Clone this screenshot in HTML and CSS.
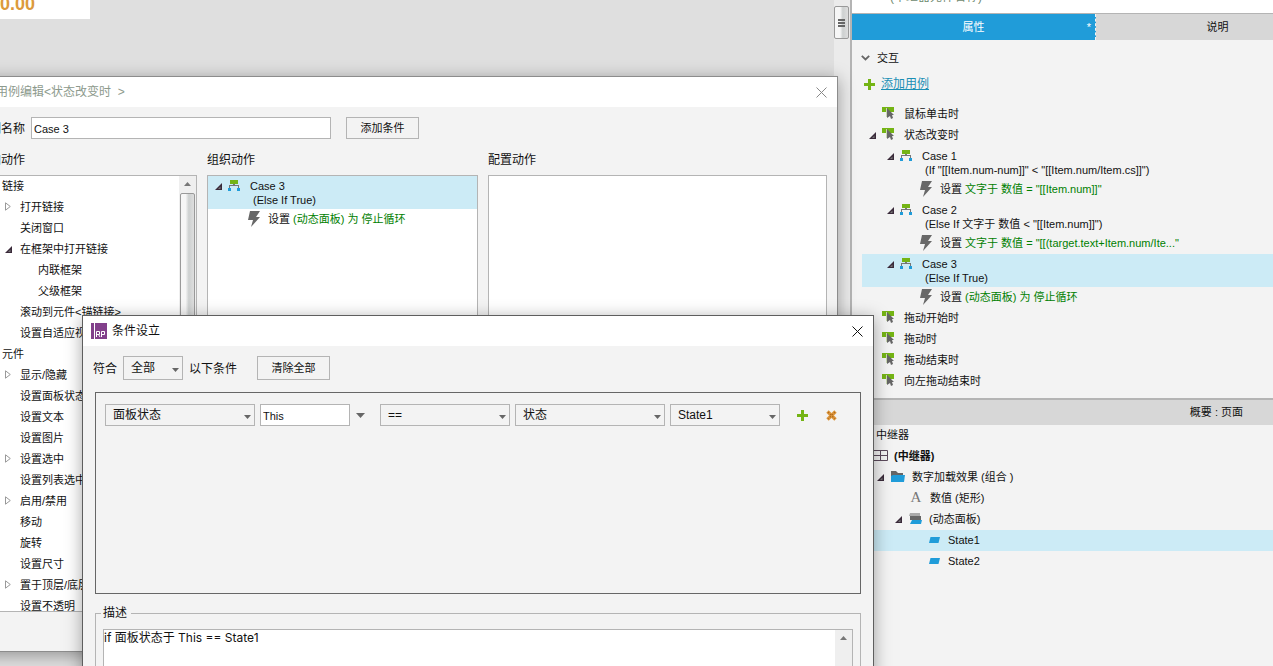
FILE: index.html
```html
<!DOCTYPE html>
<html lang="zh-CN">
<head>
<meta charset="utf-8">
<title>条件设立</title>
<link rel="stylesheet" href="styles.css">
</head>
<body>
<svg class="defs" aria-hidden="true">
  <symbol id="open" viewBox="0 0 7 7"><path d="M7 0V7H0Z" fill="#3a2a3a"/><path d="M5.5 3.5V6H3Z" fill="#777"/></symbol>
  <symbol id="closed" viewBox="0 0 6 9"><path d="M.5.8V8.2L5.3 4.5Z" fill="#fff" stroke="#999"/></symbol>
  <symbol id="case" viewBox="0 0 12 11"><path d="M2 0H10V4H2Z" fill="#74b414"/><path d="M5 4H7V5H11V8H10V6H2V8H1V5H5Z" fill="#777"/><path d="M0 8H3V11H0ZM9 8H12V11H9Z" fill="#209cd9"/></symbol>
  <symbol id="event" viewBox="0 0 12 12"><path d="M0 0H12V5H0Z" fill="#74b414"/><path d="M5 1L12 8H10L11 11L9 12L8 9L5 11Z" fill="#666"/><path d="M4 1H5V10H4Z" fill="#c9d8b0"/></symbol>
  <symbol id="bolt" viewBox="0 0 12 16"><path d="M2 0H12L8 6H12L3 16L5 9H0Z" fill="#686868"/></symbol>
  <symbol id="down" viewBox="0 0 9 5"><path d="M0 0H9L4.500 5Z" fill="#666"/></symbol>
  <symbol id="up" viewBox="0 0 7 4"><path d="M0 4H7L3.500 0Z" fill="#777"/></symbol>
  <symbol id="plus" viewBox="0 0 11 11"><path d="M4 0H7V4H11V7H7V11H4V7H0V4H4Z" fill="#74b414"/></symbol>
  <symbol id="close" viewBox="0 0 11 11"><path d="M.5.5L10.500 10.500M10.500.5L.5 10.500" fill="none" stroke="currentColor" stroke-width="1"/></symbol>
  <symbol id="remove" viewBox="0 0 11 11"><path d="M1.500 1.500L9.500 9.500M9.500 1.500L1.500 9.500" stroke="#dc963c" stroke-width="3.400"/><path d="M2 2L9 9M9 2L2 9" stroke="#b0691c" stroke-width="1.200" stroke-dasharray="1.500 1.500"/></symbol>
  <symbol id="chevron" viewBox="0 0 9 6"><path d="M.8.8L4.500 4.500L8.200.8" fill="none" stroke="#666" stroke-width="1.800"/></symbol>
  <symbol id="repeater" viewBox="0 0 15 11"><path d="M.5.5H14.500V10.500H.5ZM7.500.5V10.500M.5 5.500H14.500" fill="none" stroke="#5c4a5c"/></symbol>
  <symbol id="folder" viewBox="0 0 14 11"><path d="M0 0H5L7 2H12V5H0Z" fill="#666"/><path d="M0 11V5L2 4H14L13 11Z" fill="#209cd9"/></symbol>
  <symbol id="panel" viewBox="0 0 13 11"><path d="M1 0H11V3H0Z" fill="#aaa"/><path d="M1 3H12V7H1Z" fill="#666"/><path d="M3 7H13L12 11H1Z" fill="#209cd9"/></symbol>
  <symbol id="state" viewBox="0 0 11 6"><path d="M1.500 0H11L9.500 6H0Z" fill="#209cd9"/></symbol>
</svg>

<div class="desktop">
  <main class="canvas">
    <div class="shape">0.00</div>
    <div class="canvas-scroll"><div class="canvas-thumb"><i></i><i></i><i></i></div></div>
  </main>

  <aside class="sidebar">
    <div class="hint"><span>(中继器元件名称)</span></div>
    <nav class="tabs">
      <button class="tab active">属性<span class="star">*</span></button>
      <button class="tab">说明</button>
    </nav>
    <section class="props">
      <h2 class="section"><svg class="chev"><use href="#chevron"/></svg>交互</h2>
      <div class="add"><svg class="ic11"><use href="#plus"/></svg><a href="#">添加用例</a></div>
      <ul class="tree">
        <li class="row event"><svg class="ic12 ev"><use href="#event"/></svg>鼠标单击时</li>
        <li class="row event expanded"><svg class="arrow"><use href="#open"/></svg><svg class="ic12 ev"><use href="#event"/></svg>状态改变时</li>
        <li class="case"><svg class="arrow"><use href="#open"/></svg><svg class="ic12"><use href="#case"/></svg><div>Case 1<p>(If "[[Item.num-num]]" &lt; "[[Item.num/Item.cs]]")</p></div></li>
        <li class="row action"><svg class="bolt"><use href="#bolt"/></svg><span>设置 <em>文字于 数值 = "[[Item.num]]"</em></span></li>
        <li class="case"><svg class="arrow"><use href="#open"/></svg><svg class="ic12"><use href="#case"/></svg><div>Case 2<p>(Else If 文字于 数值 &lt; "[[Item.num]]")</p></div></li>
        <li class="row action"><svg class="bolt"><use href="#bolt"/></svg><span>设置 <em>文字于 数值 = "[[(target.text+Item.num/Ite..."</em></span></li>
        <li class="case selected"><svg class="arrow"><use href="#open"/></svg><svg class="ic12"><use href="#case"/></svg><div>Case 3<p>(Else If True)</p></div></li>
        <li class="row action"><svg class="bolt"><use href="#bolt"/></svg><span>设置 <em>(动态面板) 为 停止循环</em></span></li>
        <li class="row event"><svg class="ic12 ev"><use href="#event"/></svg>拖动开始时</li>
        <li class="row event"><svg class="ic12 ev"><use href="#event"/></svg>拖动时</li>
        <li class="row event"><svg class="ic12 ev"><use href="#event"/></svg>拖动结束时</li>
        <li class="row event"><svg class="ic12 ev"><use href="#event"/></svg>向左拖动结束时</li>
      </ul>
    </section>
    <section class="outline">
      <h2 class="outline-head">概要 : 页面</h2>
      <ul>
        <li class="row o-root">中继器</li>
        <li class="row o-repeater"><svg class="rep"><use href="#repeater"/></svg><b>(中继器)</b></li>
        <li class="row o-group"><svg class="arrow"><use href="#open"/></svg><svg class="folder"><use href="#folder"/></svg>数字加载效果 (组合 )</li>
        <li class="row o-shape"><span class="letter">A</span>数值 (矩形)</li>
        <li class="row o-panel"><svg class="arrow"><use href="#open"/></svg><svg class="panel"><use href="#panel"/></svg>(动态面板)</li>
        <li class="row o-state selected"><svg class="state"><use href="#state"/></svg>State1</li>
        <li class="row o-state"><svg class="state"><use href="#state"/></svg>State2</li>
      </ul>
    </section>
  </aside>

  <section class="window case-editor">
    <header class="titlebar"><h1>用例编辑&lt;状态改变时 &nbsp;&gt;</h1><button class="x" aria-label="关闭"><svg class="ic11"><use href="#close"/></svg></button></header>
    <div class="name-row">
      <label for="case-name">用例名称</label>
      <input id="case-name" type="text" value="Case 3">
      <button class="btn">添加条件</button>
    </div>
    <div class="columns">
      <h2>添加动作</h2><h2>组织动作</h2><h2>配置动作</h2>
      <div class="box actions">
        <ul>
          <li class="row l0">链接</li>
          <li class="row l1 more"><svg class="closed"><use href="#closed"/></svg>打开链接</li>
          <li class="row l1">关闭窗口</li>
          <li class="row l1 more"><svg class="arrow"><use href="#open"/></svg>在框架中打开链接</li>
          <li class="row l2">内联框架</li>
          <li class="row l2">父级框架</li>
          <li class="row l1">滚动到元件&lt;锚链接&gt;</li>
          <li class="row l1">设置自适应视图</li>
          <li class="row l0">元件</li>
          <li class="row l1 more"><svg class="closed"><use href="#closed"/></svg>显示/隐藏</li>
          <li class="row l1">设置面板状态</li>
          <li class="row l1">设置文本</li>
          <li class="row l1">设置图片</li>
          <li class="row l1 more"><svg class="closed"><use href="#closed"/></svg>设置选中</li>
          <li class="row l1">设置列表选中项</li>
          <li class="row l1 more"><svg class="closed"><use href="#closed"/></svg>启用/禁用</li>
          <li class="row l1">移动</li>
          <li class="row l1">旋转</li>
          <li class="row l1">设置尺寸</li>
          <li class="row l1 more"><svg class="closed"><use href="#closed"/></svg>置于顶层/底层</li>
          <li class="row l1">设置不透明</li>
        </ul>
        <div class="scroll"><svg class="up"><use href="#up"/></svg><div class="thumb"></div></div>
      </div>
      <div class="box organize">
        <div class="case selected"><svg class="arrow"><use href="#open"/></svg><svg class="ic12"><use href="#case"/></svg><div>Case 3<p>(Else If True)</p></div></div>
        <div class="row action"><svg class="bolt"><use href="#bolt"/></svg><span>设置 <em>(动态面板) 为 停止循环</em></span></div>
      </div>
      <div class="box"></div>
    </div>
  </section>

  <section class="window conditions">
    <header class="titlebar">
      <svg class="logo" viewBox="0 0 16 16"><path d="M0 0H16V16H0Z" fill="#82408b"/><path d="M3.500 0V16" stroke="#fff"/><path d="M5.500 14V8.500H8.500V11.500H5.500M7.500 11.500L9 14M10.500 14V8.500H13.500V11.500H10.500" fill="none" stroke="#fff"/></svg>
      <h1>条件设立</h1><button class="x" aria-label="关闭"><svg class="ic11"><use href="#close"/></svg></button>
    </header>
    <div class="match-row">
      <label for="match">符合</label>
      <span class="pick"><select id="match"><option>全部</option></select><svg><use href="#down"/></svg></span>
      <span class="after">以下条件</span>
      <button class="btn">清除全部</button>
    </div>
    <div class="rules">
      <div class="rule">
        <span class="pick w150"><select aria-label="类型"><option>面板状态</option></select><svg><use href="#down"/></svg></span>
        <input type="text" aria-label="目标" value="This">
        <button class="drop" aria-label="选择目标"><svg><use href="#down"/></svg></button>
        <span class="pick w130"><select aria-label="比较"><option>==</option></select><svg><use href="#down"/></svg></span>
        <span class="pick w150"><select aria-label="值类型"><option>状态</option></select><svg><use href="#down"/></svg></span>
        <span class="pick w110"><select aria-label="值"><option>State1</option></select><svg><use href="#down"/></svg></span>
        <button class="tool" aria-label="添加"><svg class="ic11"><use href="#plus"/></svg></button>
        <button class="tool" aria-label="删除"><svg class="ic11"><use href="#remove"/></svg></button>
      </div>
    </div>
    <fieldset>
      <legend><label for="desc">描述</label></legend>
      <div class="desc">
        <textarea id="desc" readonly>if 面板状态于 This == State1</textarea>
        <div class="scroll"><svg class="up"><use href="#up"/></svg></div>
      </div>
    </fieldset>
  </section>
</div>
</body>
</html>
```

FILE: styles.css
```css
* { box-sizing: border-box; }
body {
  margin: 0;
  overflow: hidden;
  color: #111;
  font: 11px/14px "Liberation Sans", "Noto Sans CJK SC", sans-serif;
}
h1, h2, p, ul { margin: 0; padding: 0; font-size: 12px; font-weight: normal; }
ul { list-style: none; font-size: 11px; }
p { font-size: 11px; padding-left: 3px; }
em { font-style: normal; color: #008000; }
button { padding: 0; border: 0; background: none; color: inherit; font: inherit; }
input, select, textarea { font: inherit; color: inherit; border-radius: 0; outline: 0; }
input { border: 1px solid #b4b4b4; background: #fff; padding: 1px 2px 0; }
svg { flex: none; display: block; }
.defs { position: absolute; width: 0; height: 0; }

.desktop { position: relative; display: flex; height: 100vh; overflow: hidden; }

/* canvas */
.canvas { flex: 1; display: flex; justify-content: space-between; align-items: flex-start; background: #dfdfdf; }
.shape {
  width: 90px; height: 19px; overflow: hidden; background: #fff;
  color: #dc9a3c; font-size: 18px; font-weight: bold; line-height: 8px;
}
.canvas-scroll { width: 16px; height: 100%; padding-top: 6px; background: #ebebeb; }
.canvas-thumb {
  width: 15px; height: 33px; display: flex; flex-direction: column; gap: 1px;
  align-items: center; justify-content: center;
  border: 1px solid #999; border-radius: 2px;
  background: linear-gradient(90deg, #f6f6f6 40%, #cdd0d0 60%, #dedede);
}
.canvas-thumb i { width: 7px; height: 2px; background: #666; }

/* sidebar */
.sidebar { flex: 0 0 423px; overflow: hidden; border-left: 2px solid #b4b4b4; background: #f3f3f3; }
.hint {
  height: 14px; padding-left: 38px; overflow: hidden;
  background: #fff; border-bottom: 1px solid #b4b4b4; color: #6f8a6f; font-size: 12px; line-height: 14px;
}
.hint span { display: block; margin-top: -10px; }
.tabs { display: flex; }
.tab {
  flex: 0 0 244px; height: 26px; display: grid; grid-template-columns: 1fr auto 1fr; align-items: center;
  background: #d7d7d7; border-right: 1px dashed #f3f3f3;
}
.tab::before { content: ""; }
.active { background: #209cd9; color: #fff; }
.star { justify-self: end; padding-right: 4px; }
.props { height: 358px; }
.section { display: flex; align-items: center; gap: 7px; padding: 11px 0 0 9px; font-size: 11px; }
.chev { width: 9px; height: 6px; }
.add { display: flex; align-items: center; gap: 6px; padding: 12px 0 13px 12px; font-size: 12px; }
.add a { color: #1b8fb5; }
.tree { margin-left: 10px; }

.row { display: flex; align-items: center; height: 21px; padding-bottom: 2px; white-space: nowrap; }
.case { display: flex; height: 33px; padding: 3px 0 0 25px; white-space: nowrap; }
.case .arrow { margin: 4px 6px 0 0; }
.case .ic12 { margin: 1px 10px 0 0; height: 11px; }
.selected { background: #ccebf6; }
.arrow { width: 7px; height: 7px; }
.row .arrow { margin-top: 2px; }
.ic12 { width: 12px; height: 12px; }
.ic11 { width: 11px; height: 11px; }
.bolt { width: 12px; height: 16px; }
.event { padding-left: 20px; gap: 10px; }
.event .ev { margin-bottom: 1px; }
.expanded { padding-left: 7px; gap: 6px; }
.expanded .ev { margin-right: 4px; }
.action { padding-left: 58px; gap: 8px; }

.outline { border-top: 2px solid #b4b4b4; }
.outline-head { height: 25px; padding-right: 30px; background: #d7d7d7; text-align: right; font-size: 11px; line-height: 24px; }
.o-root { padding-left: 24px; }
.o-repeater { padding-left: 21px; gap: 6px; }
.o-group { padding-left: 25px; gap: 7px; }
.o-shape { padding-left: 58px; gap: 8px; }
.o-panel { padding-left: 43px; gap: 7px; }
.o-state { padding-left: 77px; gap: 8px; }
.rep { width: 15px; height: 11px; }
.folder { width: 14px; height: 11px; }
.panel { width: 13px; height: 11px; }
.state { width: 11px; height: 6px; }
.letter { width: 12px; color: #777; font: 15px/15px "Liberation Serif", serif; text-align: center; }

/* windows */
.window { position: absolute; background: #f3f3f3; border: 1px solid #8c8c8c; box-shadow: 0 3px 16px rgba(0, 0, 0, .35); }
.titlebar { display: flex; align-items: center; height: 30px; padding: 0 10px; background: #fff; }
.x { margin-left: auto; }
.btn { width: 73px; height: 22px; border: 1px solid #b4b4b4; }

.case-editor { left: -36px; top: 76px; width: 874px; padding-bottom: 39px; }
.case-editor .titlebar { padding-left: 31px; color: #8d9a8d; }
.case-editor .x { color: #888; }
.name-row { display: flex; align-items: center; padding: 10px 10px 0 12px; font-size: 12px; }
.name-row label, .match-row label, .after { padding-top: 2px; }
.name-row input { width: 300px; height: 22px; margin: 0 15px 0 6px; font-size: 11px; }
.name-row .btn { font-size: 11px; }
.columns { display: grid; grid-template-columns: 220px 271px 1fr; column-gap: 10px; padding: 14px 10px 0 12px; }
.columns h2 { height: 22px; }
.box { height: 437px; overflow: hidden; background: #fff; border: 1px solid #b4b4b4; }
.actions { display: flex; }
.actions ul { flex: 1; }
.l0 { padding-left: 24px; }
.l1 { padding-left: 42px; }
.l2 { padding-left: 60px; }
.more { padding-left: 27px; }
.closed { width: 6px; height: 9px; margin-right: 9px; }
.more .arrow { width: 7px; margin-right: 8px; }
.scroll { flex: 0 0 17px; display: flex; flex-direction: column; align-items: center; padding-top: 6px; background: #efefef; }
.up { width: 7px; height: 4px; }
.thumb {
  width: 15px; height: 300px; margin-top: 7px; border: 1px solid #999; border-radius: 2px;
  background: linear-gradient(90deg, #f6f6f6 35%, #cdd0d0 60%, #dedede);
}
.organize .case { padding-left: 7px; }
.organize .action { padding-left: 40px; }

.conditions { left: 82px; top: 315px; width: 792px; padding-bottom: 12px; border-color: #5e5e5e; font-size: 12px; }
.conditions .titlebar { gap: 5px; padding: 0 10px 0 8px; }
.logo { width: 16px; height: 16px; }
.match-row { display: flex; align-items: center; padding: 10px 10px 0; }
.match-row .pick { width: 60px; height: 24px; margin: 0 6px; }
.match-row .btn { height: 24px; margin-left: 20px; font-size: 11px; }
.pick { display: grid; height: 22px; align-items: center; }
.pick select {
  grid-area: 1 / 1; width: 100%; height: 100%; padding: 0 7px;
  appearance: none; border: 1px solid #b4b4b4; background: #f3f3f3;
}
.pick svg { grid-area: 1 / 1; justify-self: end; width: 7px; height: 4px; margin: 3px 4px 0 0; pointer-events: none; }
.rules { height: 202px; margin: 12px 12px 0; padding: 11px 9px; border: 1px solid #666; }
.rule { display: flex; align-items: center; gap: 5px; }
.rule input { width: 90px; height: 22px; font-size: 11px; }
.drop { width: 20px; }
.drop svg { width: 9px; height: 5px; margin-left: 1px; }
.w150 { width: 150px; }
.w130 { width: 130px; }
.w110 { width: 110px; }
.tool { width: 24px; display: flex; justify-content: center; }
.tool:nth-last-child(2) { margin-left: 5px; }
fieldset { margin: 12px 12px 0; padding: 9px 7px; border: 1px solid #b4b4b4; }
legend { padding: 0 4px 0 2px; margin-left: -2px; line-height: 14px; }
.desc { display: flex; height: 80px; border: 1px solid #b4b4b4; background: #fff; }
.desc textarea {
  flex: 1; padding: 0; border: 0; resize: none; overflow: hidden; background: #fff;
  font: 12px/16px Inter, "Noto Sans CJK SC", sans-serif;
}
```
